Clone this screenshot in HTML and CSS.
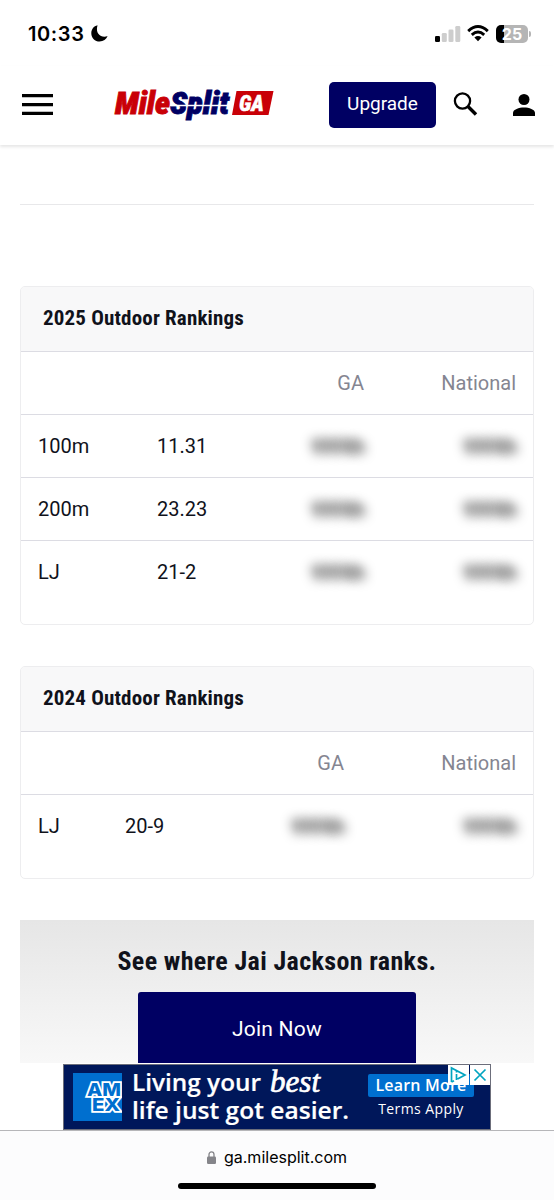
FILE: index.html
```
<!DOCTYPE html>
<html lang="en">
<head>
  <meta charset="UTF-8" />
  <meta name="viewport" content="width=device-width, initial-scale=1.0"/>
  <title>Jai Jackson - MileSplit GA</title>
  <link rel="stylesheet" href="styles.css">
</head>
<body>
  <div class="status-bar">
    <span class="clock">10:33</span>
    <svg class="moon" width="17" height="17" viewBox="0 0 17 17"><path d="M6.500.3C2.800 1.200.3 4.300.3 8.200c0 4.700 3.700 8.300 8.300 8.300 3.800 0 6.700-2 8-5.400C11 13.300 3.800 9.500 6.500.3Z"/></svg>
    <svg class="signal" width="26" height="16" viewBox="0 0 26 16">
      <rect x="0" y="10" width="5" height="6" rx="1.3"/>
      <g fill="#cdcdcd"><rect x="6.8" y="7" width="5" height="9" rx="1.3"/><rect x="13.5" y="3.5" width="5" height="12.5" rx="1.3"/><rect x="20.3" y="0" width="5" height="16" rx="1.3"/></g>
    </svg>
    <svg class="wifi" width="22" height="17" viewBox="0 0 22 17">
      <g fill="none" stroke="#000" stroke-width="2.9"><path d="M1.2 6.1Q11 -3 20.8 6.1"/><path d="M4.8 9.8Q11 4.2 17.2 9.8"/></g>
      <path d="M7.4 12.5Q11 9.7 14.6 12.5L11 16.3Z"/>
    </svg>
    <div class="battery"><span>25</span></div>
  </div>

  <header class="navbar">
    <svg class="menu" width="31" height="22" viewBox="0 0 31 22"><path d="M0 1.7h31M0 10.7h31M0 19.3h31" stroke="#000" stroke-width="3.2"/></svg>
    <svg class="logo" width="160" height="30" viewBox="0 0 160 30">
      <g class="logo-text">
        <text class="red" x="1" y="23" textLength="55" lengthAdjust="spacingAndGlyphs">Mile</text>
        <text class="blue" x="56" y="23" textLength="59" lengthAdjust="spacingAndGlyphs">Split</text>
      </g>
      <path d="M57 14.500h60" stroke="#fff" stroke-width="1.4"/>
      <path d="M122.500 0H159.500L154.500 24H118Z" fill="#c90007"/>
      <text class="logo-state" x="125" y="19.500" textLength="25" lengthAdjust="spacingAndGlyphs">GA</text>
    </svg>
    <a class="upgrade" href="#">Upgrade</a>
    <svg class="search" width="25" height="25" viewBox="0 0 25 25"><circle cx="9.500" cy="9" r="7.600" fill="none" stroke="#000" stroke-width="2.300"/><path d="M15 14.500l8 8" stroke="#000" stroke-width="3.400"/></svg>
    <svg class="user" width="22" height="22" viewBox="0 0 22 22"><circle cx="11" cy="5.500" r="5.500"/><path d="M0 22v-3c0-3.600 6-5.500 11-5.500s11 1.900 11 5.500v3z"/></svg>
  </header>

  <main>
    <hr>
    <section class="card">
      <h3><span>2025 Outdoor Rankings</span></h3>
      <table class="season-2025">
        <tr><th class="event"></th><th class="mark"></th><th class="state">GA</th><th>National</th></tr>
        <tr><td>100m</td><td>11.31</td><td class="rank"><span>9999th</span></td><td class="rank"><span>9999th</span></td></tr>
        <tr><td>200m</td><td>23.23</td><td class="rank"><span>9999th</span></td><td class="rank"><span>9999th</span></td></tr>
        <tr><td>LJ</td><td>21-2</td><td class="rank"><span>9999th</span></td><td class="rank"><span>9999th</span></td></tr>
      </table>
    </section>
    <section class="card">
      <h3><span>2024 Outdoor Rankings</span></h3>
      <table class="season-2024">
        <tr><th class="event"></th><th class="mark"></th><th class="state">GA</th><th>National</th></tr>
        <tr><td>LJ</td><td>20-9</td><td class="rank"><span>9999th</span></td><td class="rank"><span>9999th</span></td></tr>
      </table>
    </section>
    <section class="join">
      <h2>See where Jai Jackson ranks.</h2>
      <a href="#">Join Now</a>
    </section>
  </main>

  <aside class="ad">
    <svg class="amex" width="49" height="48" viewBox="0 0 49 48">
      <rect width="49" height="48" fill="#006fcf"/>
      <g class="amex-text">
        <text x="14" y="22.500" textLength="34" lengthAdjust="spacingAndGlyphs">AM</text>
        <text x="19" y="38" textLength="28" lengthAdjust="spacingAndGlyphs">EX</text>
      </g>
    </svg>
    <svg class="ad-copy" width="220" height="64" viewBox="0 0 220 64">
      <text x="-1" y="26" textLength="129" lengthAdjust="spacingAndGlyphs">Living your</text>
      <text x="-1" y="54" textLength="217" lengthAdjust="spacingAndGlyphs">life just got easier.</text>
      <text class="script" x="137" y="27" textLength="50" lengthAdjust="spacingAndGlyphs">best</text>
    </svg>
    <div class="ad-action">
      <span class="learn">Learn More</span>
      <span class="terms">Terms Apply</span>
    </div>
    <div class="ad-choices">
      <svg width="21" height="20" viewBox="0 0 21 20"><path d="M3.500 17V3L17 10 9.500 14M8.500 9v6M8.500 6v1.500M3.500 17l2.500-1.300"/></svg>
      <svg width="20" height="20" viewBox="0 0 20 20"><path d="M4.500 4.500l11 11M15.500 4.500l-11 11"/></svg>
    </div>
  </aside>

  <footer class="browser-bar">
    <div class="address">
      <svg width="9" height="13" viewBox="0 0 9 13"><rect y="5.500" width="9" height="7.500" rx="1.200" fill="#85858a"/><path d="M2 6V3.500a2.500 2.700 0 0 1 5 0V6" fill="none" stroke="#85858a" stroke-width="1.300"/></svg>
      <span>ga.milesplit.com</span>
    </div>
    <div class="home-indicator"></div>
  </footer>
</body>
</html>
```
FILE: styles.css
```
* {
  box-sizing: border-box;
}
body {
  margin: 0;
  height: 1200px;
  display: flex;
  flex-direction: column;
  background: #fff;
  color: #10121b;
  font-family: Roboto, sans-serif;
  overflow: hidden;
}
svg {
  display: block;
  flex: none;
}
.status-bar {
  height: 66px;
  display: flex;
  align-items: center;
  padding: 1px 23px 0 28px;
}
.clock {
  font: 600 20px Inter, sans-serif;
  color: #000;
  width: 58px;
  letter-spacing: 0.6px;
}
.moon {
  margin-left: 5px;
}
.signal {
  margin-left: auto;
  margin-right: 2px;
}
.wifi {
  margin: 0 7px 0 4px;
}
.battery {
  position: relative;
  width: 32px;
  height: 18px;
  border-radius: 5px;
  background: linear-gradient(to right, #000 8px, #b5b5b5 8px);
  color: #fff;
  font: 700 16px/18px Inter, sans-serif;
  text-align: center;
  margin-right: 3px;
}
.battery::after {
  content: "";
  position: absolute;
  left: 33px;
  top: 6px;
  width: 2px;
  height: 6px;
  border-radius: 0 2px 2px 0;
  background: #b5b5b5;
}
.navbar {
  height: 79px;
  flex: none;
  display: flex;
  align-items: center;
  padding: 0 19px 2px 22px;
  box-shadow: 0 2px 3px rgba(0, 0, 0, 0.1);
}
.logo {
  margin-left: 61px;
  margin-top: 2px;
  overflow: visible;
}
.logo-text {
  font: italic 900 31px Roboto, sans-serif;
  font-stretch: 75%;
  stroke-width: 0.8;
}
.red {
  fill: #c90007;
  stroke: #c90007;
}
.blue {
  fill: #000063;
  stroke: #000063;
}
.logo-state {
  font: italic 900 22px Roboto, sans-serif;
  font-stretch: 75%;
  fill: #fff;
  stroke: #fff;
  stroke-width: 0.4;
}
.upgrade {
  width: 107px;
  height: 46px;
  margin-left: 55px;
  border-radius: 5px;
  background: #000063;
  color: #fff;
  font-size: 19px;
  line-height: 44px;
  text-align: center;
  text-decoration: none;
}
.search {
  margin-left: 17px;
}
.user {
  margin-left: auto;
}
main {
  flex: none;
  height: 919px;
  padding: 59px 20px 0;
}
hr {
  border: 0;
  height: 1px;
  margin: 0 0 81px;
  background: #e8e8ea;
}
.card {
  border: 1px solid #ededef;
  border-radius: 5px;
  padding-bottom: 21px;
  margin-bottom: 41px;
  overflow: hidden;
}
.card h3 {
  height: 64px;
  margin: 0;
  padding-left: 22px;
  background: #f8f8f9;
  font: bold 21px/63px "Roboto Condensed", Roboto, sans-serif;
  font-stretch: 75%;
  letter-spacing: 0.17px;
}
table {
  width: 100%;
  table-layout: fixed;
  border-collapse: separate;
  border-spacing: 0;
}
th, td {
  height: 63px;
  padding: 0 17px;
  border-top: 1px solid #dcdce3;
  font-size: 20px;
  font-weight: 400;
  text-align: left;
}
th {
  color: #858591;
  text-align: right;
}
.season-2025 .event {
  width: 119px;
}
.season-2025 .mark {
  width: 120px;
}
.season-2025 .state {
  width: 121px;
}
.season-2024 .event {
  width: 87px;
}
.season-2024 .mark {
  width: 120px;
}
.season-2024 .state {
  width: 133px;
}
.rank {
  text-align: right;
}
.rank span {
  font-size: 20px;
  letter-spacing: -1.6px;
  color: transparent;
  text-shadow: 0 1px 11px #111;
}
.join {
  height: 143px;
  padding-top: 21px;
  background: linear-gradient(#e6e6e6, #f8f8f8);
  text-align: center;
}
.join h2 {
  margin: 0 0 11px;
  font: bold 26px/40px "Roboto Condensed", Roboto, sans-serif;
  font-stretch: 75%;
  letter-spacing: 0.36px;
}
.join a {
  display: block;
  width: 278px;
  height: 71px;
  margin: 0 auto;
  border-radius: 3px 3px 0 0;
  background: #000063;
  color: #fff;
  font-size: 21px;
  line-height: 74px;
  letter-spacing: 0.2px;
  text-decoration: none;
}
.ad {
  position: relative;
  width: 428px;
  height: 66px;
  flex: none;
  margin-left: 63px;
  border: 1px solid #6c6e7b;
  background: #00175a;
  color: #fff;
  display: flex;
  align-items: center;
}
.amex {
  margin-left: 9px;
}
.amex-text {
  font: 800 18px Inter, sans-serif;
  fill: #006fcf;
  stroke: #fff;
  stroke-width: 3.5;
  paint-order: stroke;
}
.ad-copy {
  margin-left: 11px;
  overflow: visible;
  font: 600 24px "Open Sans", sans-serif;
  fill: #fff;
  stroke: #fff;
  stroke-width: 0.2;
}
.script {
  font: italic 32px "Liberation Serif", serif;
  stroke-width: 0.7;
}
.ad-action {
  width: 106px;
  margin-left: 15px;
  font-family: "Open Sans", sans-serif;
  text-align: center;
}
.learn, .terms {
  display: block;
  height: 23px;
  line-height: 22px;
}
.learn {
  border-radius: 2px;
  background: #006fcf;
  font-size: 16px;
  font-weight: 600;
  letter-spacing: 0.2px;
}
.terms {
  font-size: 14px;
  font-weight: 500;
  line-height: 24px;
  letter-spacing: 0.4px;
}
.ad-choices {
  position: absolute;
  top: 0;
  right: 0;
  display: flex;
  gap: 1px;
}
.ad-choices svg {
  background: #fff;
  fill: none;
  stroke: #00a4c0;
  stroke-width: 1.7;
}
.browser-bar {
  flex: 1;
  border-top: 1px solid #b6b6b9;
  background: #fcfcfd;
}
.address {
  height: 52px;
  display: flex;
  align-items: center;
  justify-content: center;
  gap: 8px;
  color: #000;
  font: 16px Inter, sans-serif;
}
.home-indicator {
  width: 198px;
  height: 6px;
  margin: 0 auto;
  border-radius: 3px;
  background: #000;
}
```
